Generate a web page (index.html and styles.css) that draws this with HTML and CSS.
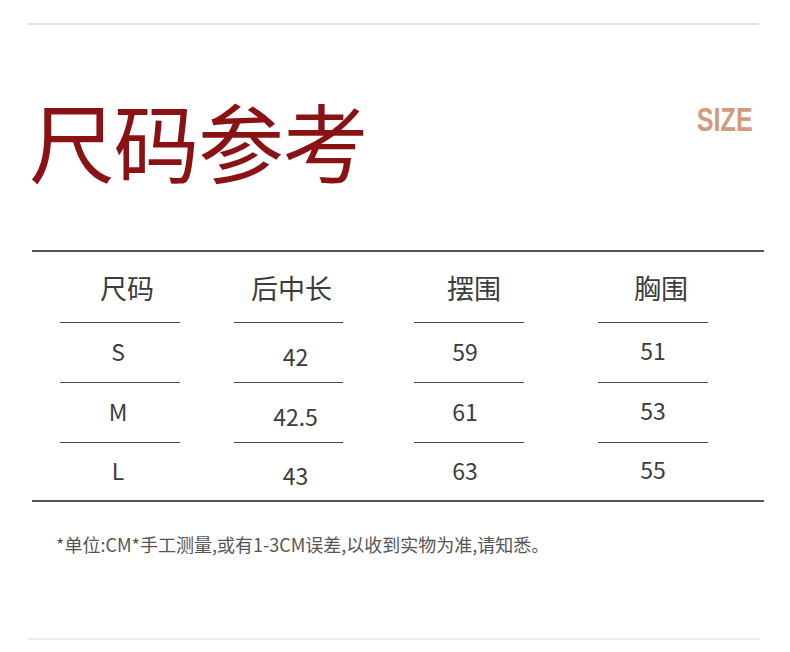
FILE: index.html
```html
<!DOCTYPE html>
<html lang="zh-CN">
<head>
<meta charset="utf-8">
<title>尺码参考</title>
<link rel="stylesheet" href="styles.css">
</head>
<body>
<div class="page">
  <div class="rule rule-top"></div>
  <header class="head">
    <h1 class="title">尺码参考</h1>
    <div class="size-mark"><span class="size-text">SIZE</span></div>
  </header>
  <section class="size-table">
    <div class="col col-1">
      <div class="cell th">尺码</div>
      <div class="cell td">S</div>
      <div class="cell td">M</div>
      <div class="cell td last">L</div>
    </div>
    <div class="col col-2">
      <div class="cell th">后中长</div>
      <div class="cell td">42</div>
      <div class="cell td">42.5</div>
      <div class="cell td last">43</div>
    </div>
    <div class="col col-3">
      <div class="cell th">摆围</div>
      <div class="cell td">59</div>
      <div class="cell td">61</div>
      <div class="cell td last">63</div>
    </div>
    <div class="col col-4">
      <div class="cell th">胸围</div>
      <div class="cell td">51</div>
      <div class="cell td">53</div>
      <div class="cell td last">55</div>
    </div>
  </section>
  <p class="note">*单位:CM*手工测量,或有1-3CM误差,以收到实物为准,请知悉。</p>
  <div class="rule rule-bottom"></div>
</div>
</body>
</html>
```
FILE: styles.css
```css
html, body {
  margin: 0;
  padding: 0;
  background: #ffffff;
}
body {
  font-family: "Noto Sans CJK SC", "Noto Sans", sans-serif;
  color: #3f3f3f;
}
.page {
  width: 790px;
  height: 652px;
  display: flex;
  flex-direction: column;
  overflow: hidden;
}
.rule {
  height: 2px;
  margin-left: 28px;
  margin-right: 31px;
}
.rule-top {
  margin-top: 23px;
  background: #e0e0e0;
}
.rule-bottom {
  margin-top: auto;
  margin-bottom: 12px;
  background: #ececec;
}
.head {
  display: flex;
  justify-content: space-between;
  align-items: flex-start;
  margin: 0;
  padding: 0 36px 0 29px;
  height: 225px;
}
.title {
  margin: 72px 0 0 0;
  font-size: 86px;
  font-weight: 400;
  line-height: 1;
  color: #8a1114;
  letter-spacing: -1.5px;
  white-space: nowrap;
}
.size-mark {
  margin-top: 77px;
  width: 58px;
  display: flex;
  justify-content: center;
}
.size-text {
  display: inline-block;
  font-family: "Liberation Sans", Arial, sans-serif;
  font-weight: 700;
  font-size: 34px;
  line-height: 1;
  color: #d29b7d;
  transform: scaleX(0.74);
  transform-origin: center;
}
.size-table {
  margin: 0 26px 0 32px;
  border-top: 2px solid #545454;
  border-bottom: 2px solid #545454;
  display: flex;
  height: 248px;
}
.col {
  display: flex;
  flex-direction: column;
}
.col-1 { margin-left: 28px; width: 120px; }
.col-2 { margin-left: 54px; width: 109px; }
.col-3 { margin-left: 71px; width: 110px; }
.col-4 { margin-left: 74px; width: 110px; }
.cell {
  display: flex;
  align-items: center;
  justify-content: center;
  box-sizing: border-box;
  white-space: nowrap;
}
.th {
  height: 71px;
  font-size: 27px;
  color: #3c3c3c;
  padding-top: 1px;
  border-bottom: 1px solid #4a4a4a;
}
.td {
  height: 60px;
  font-size: 23px;
  color: #3c3c3c;
  border-bottom: 1px solid #4a4a4a;
}
.td.last {
  border-bottom: none;
  flex: 1;
}
.col-1 .th { padding-left: 14px; }
.col-1 .td { padding-right: 4px; padding-bottom: 4px; }
.col-2 .th { padding-left: 6px; }
.col-2 .td { padding-left: 14px; padding-top: 6px; }
.col-3 .th { padding-left: 10px; }
.col-3 .td { padding-right: 8px; padding-bottom: 4px; }
.col-4 .th { padding-left: 16px; }
.col-4 .td { padding-bottom: 6px; }
.note {
  margin: 30px 0 0 56px;
  font-size: 18px;
  color: #555555;
  line-height: 24px;
  white-space: nowrap;
}
```
